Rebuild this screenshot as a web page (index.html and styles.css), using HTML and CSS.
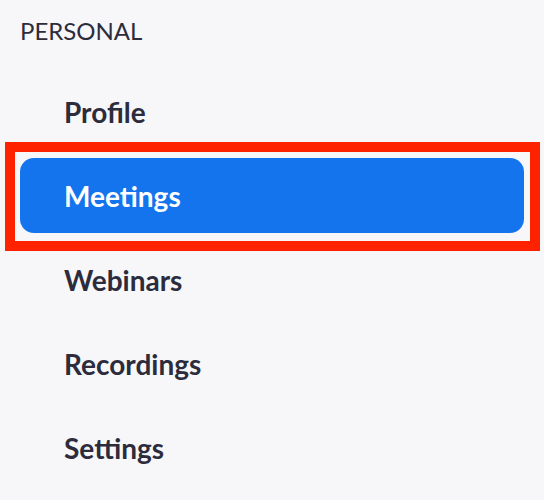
FILE: index.html
```html
<!DOCTYPE html>
<html>
<head>
<meta charset="utf-8">
<link rel="stylesheet" href="styles.css">
</head>
<body>
<nav class="sidebar">
  <div class="section-title">PERSONAL</div>
  <ul class="menu">
    <li class="item">Profile</li>
    <li class="item active">Meetings</li>
    <li class="item">Webinars</li>
    <li class="item">Recordings</li>
    <li class="item">Settings</li>
  </ul>
  <div class="highlight"></div>
</nav>
</body>
</html>
```

FILE: styles.css
```css
html, body {
  margin: 0;
  padding: 0;
  background: #f7f7fa;
}
.sidebar {
  position: relative;
  width: 544px;
  height: 500px;
  font-family: Lato, "Noto Sans", sans-serif;
  color: #2c2c3c;
}
.section-title {
  padding: 19px 0 0 20px;
  font-size: 24px;
  line-height: 24px;
  font-weight: 400;
  height: 24px;
}
.menu {
  list-style: none;
  margin: 31px 0 0 0;
  padding: 0;
  display: flex;
  flex-direction: column;
  gap: 9px;
}
.item {
  margin-left: 20px;
  width: 504px;
  height: 75px;
  box-sizing: border-box;
  padding-left: 44px;
  display: flex;
  align-items: center;
  font-size: 28px;
  font-weight: 700;
  border-radius: 14px;
}
.item.active {
  background: #1374ed;
  color: #ffffff;
}
.highlight {
  position: absolute;
  left: 5px;
  top: 142px;
  width: 535px;
  height: 109px;
  box-sizing: border-box;
  border: 10px solid #ff2200;
  pointer-events: none;
}
```
